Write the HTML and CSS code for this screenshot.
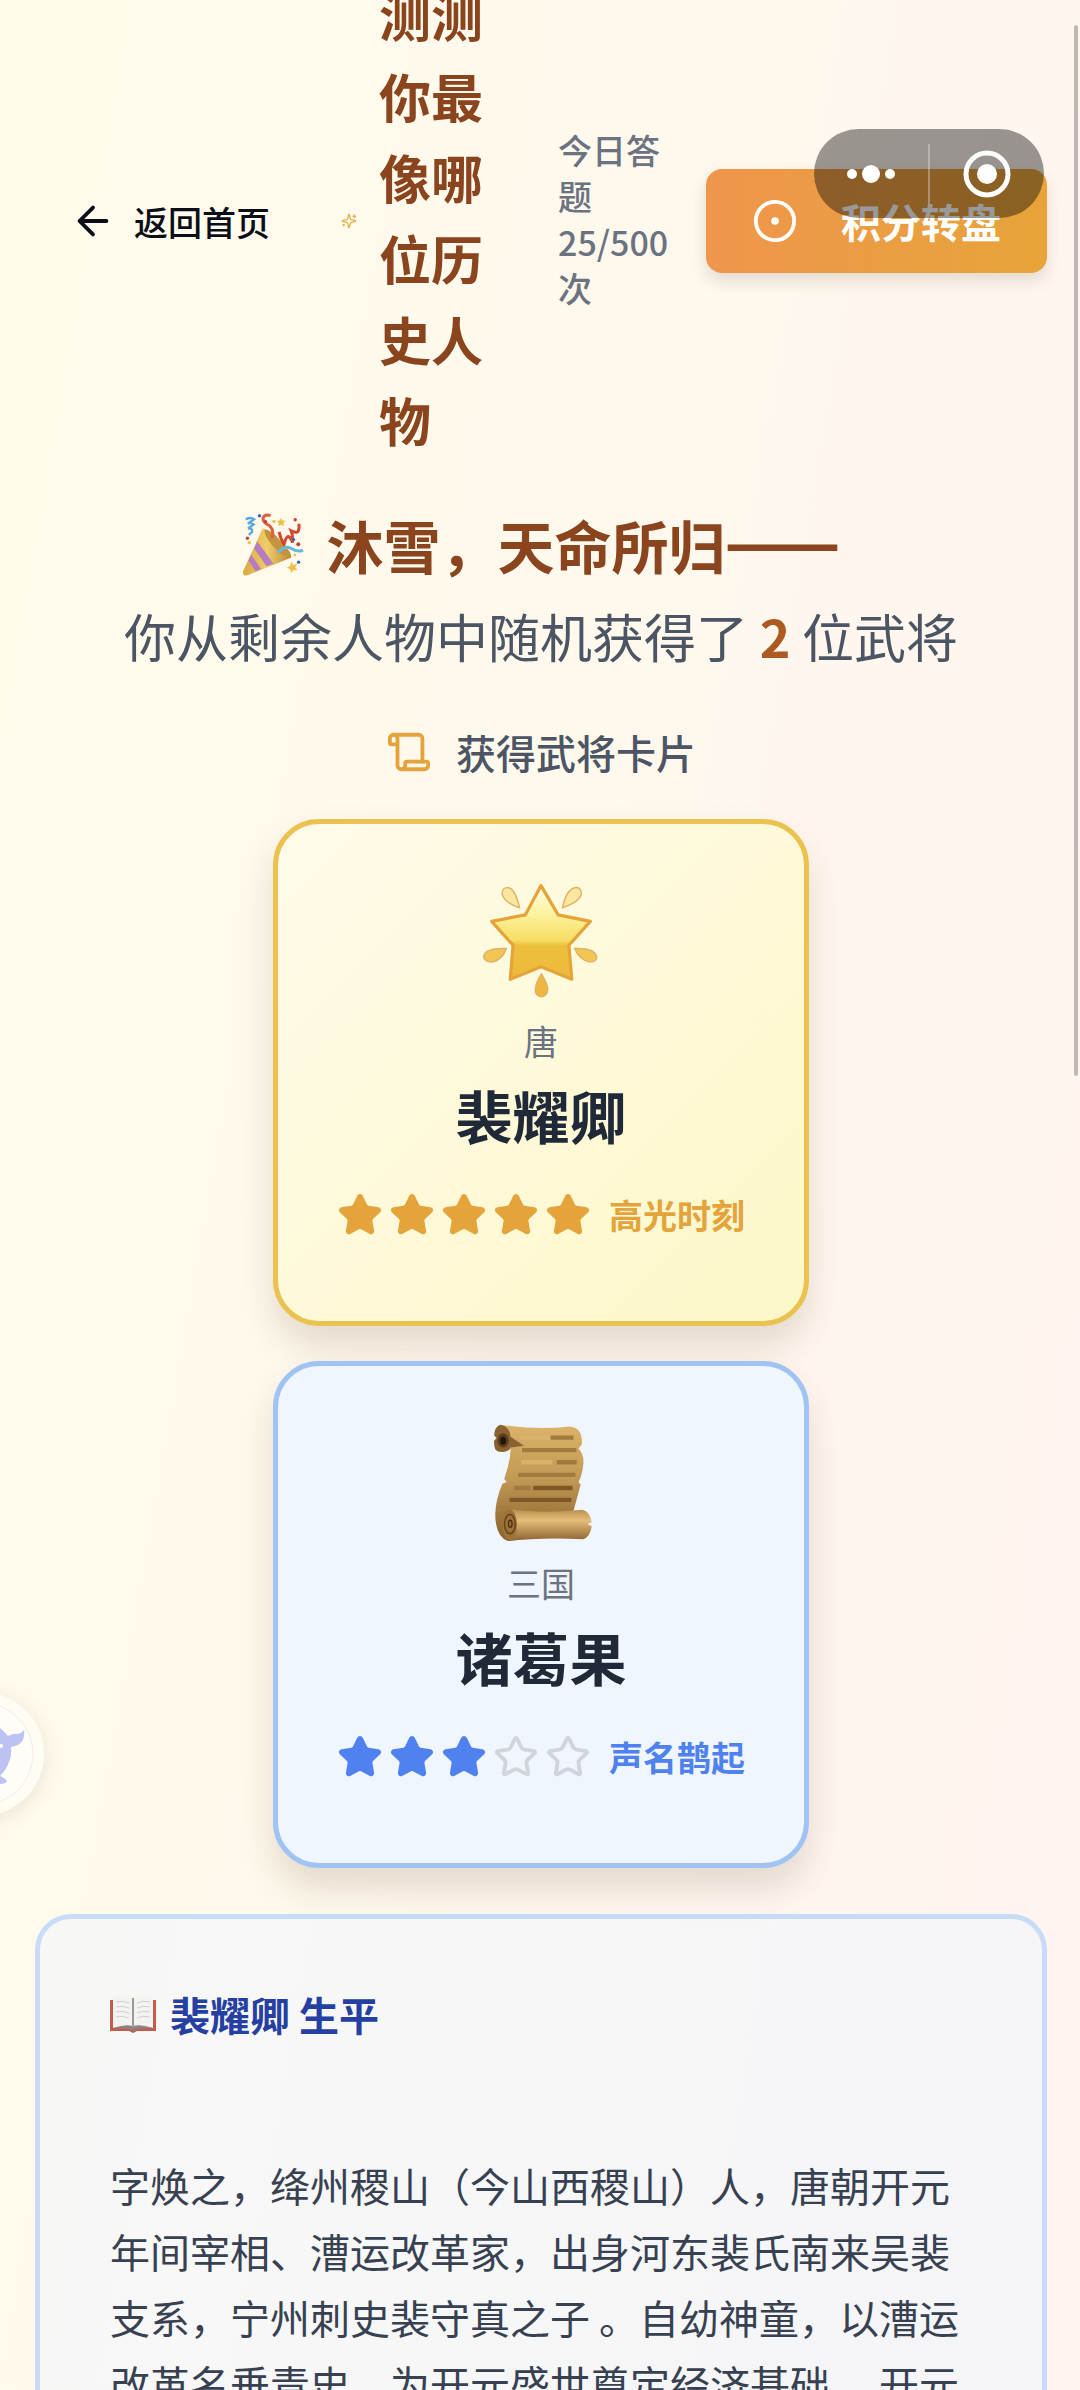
FILE: index.html
```
<!DOCTYPE html>
<html lang="zh-CN">
<head>
<meta charset="utf-8">
<meta name="viewport" content="width=device-width, initial-scale=1">
<title>测测你最像哪位历史人物</title>
<link rel="stylesheet" href="styles.css">
</head>
<body>
<svg class="defs" aria-hidden="true">
  <symbol id="star" viewBox="0 0 24 24"><path d="M11.525 2.295a.53.53 0 0 1 .95 0l2.31 4.679a2.123 2.123 0 0 0 1.595 1.16l5.166.756a.53.53 0 0 1 .294.904l-3.736 3.638a2.123 2.123 0 0 0-.611 1.878l.882 5.14a.53.53 0 0 1-.771.56l-4.618-2.428a2.122 2.122 0 0 0-1.973 0L6.396 21.01a.53.53 0 0 1-.77-.56l.881-5.139a2.122 2.122 0 0 0-.611-1.879L2.16 9.795a.53.53 0 0 1 .294-.906l5.165-.755a2.122 2.122 0 0 0 1.597-1.16z" stroke="currentColor" stroke-width="2" stroke-linejoin="round"/></symbol>
</svg>
<div class="page">
  <header class="topbar">
    <button class="back" type="button">
      <svg class="icon" viewBox="0 0 24 24"><path d="m12 19-7-7 7-7M19 12H5"/></svg>
      <span>返回首页</span>
    </button>
    <div class="brand">
      <svg class="icon spark" viewBox="0 0 24 24"><path d="M9.94 15.5A2 2 0 0 0 8.5 14.06l-6.14-1.58a.5.5 0 0 1 0-.96L8.5 9.94A2 2 0 0 0 9.94 8.5l1.58-6.14a.5.5 0 0 1 .96 0l1.58 6.14a2 2 0 0 0 1.44 1.44l6.14 1.58a.5.5 0 0 1 0 .96l-6.14 1.58a2 2 0 0 0-1.44 1.44l-1.58 6.14a.5.5 0 0 1-.96 0z"/><path d="M20 3v4M22 5h-4M4 17v2M5 18H3"/></svg>
      <h1>测测你最像哪位历史人物</h1>
    </div>
    <div class="tools">
      <p class="quota">今日答题25/500次</p>
      <button class="wheel" type="button">
        <svg class="icon" viewBox="0 0 24 24"><circle cx="12" cy="12" r="10"/><circle cx="12" cy="12" r="1"/></svg>
        <span>积分转盘</span>
      </button>
    </div>
  </header>

  <main>
    <h2 class="headline">
      <svg class="popper" viewBox="40 45 184 190" aria-hidden="true">
        <defs><linearGradient id="cone" x1="0" x2="1"><stop offset="0" stop-color="#d9a93c"/><stop offset=".5" stop-color="#f0cd6b"/><stop offset="1" stop-color="#b98a35"/></linearGradient></defs>
        <path d="M98 94Q110 92 150 132Q188 165 182 181L53 233Q39 236 40 222z" fill="url(#cone)"/>
        <path d="M104 97q20 0 50 36q28 30 25 45q-22 2-52-34q-27-32-23-47z" fill="#c3933f"/>
        <path d="M82 132l48 66-20 8-37-52zM64 172l30 42-17 7-21-32z" fill="#b87cc0"/>
        <path d="M122 56q-16-6-22 5q-3 12 14 22q20 12 12 40" fill="none" stroke="#dd603c" stroke-width="9"/>
        <path d="M147 104q4 20 15 37q6-24 13-23q8 5 12 18q1-24-4-35q18 8 21 1q4-9 2-22" fill="none" stroke="#d5472f" stroke-width="9"/>
        <path d="M48 67q16-8 25 0l-19 12q12-3 18 3l-17 12q13-2 12 10l-10 9" fill="none" stroke="#57a9dc" stroke-width="7"/>
        <path d="M143 166q20-22 38-14q22 14 37 6" fill="none" stroke="#68b9df" stroke-width="9"/>
        <g fill="#f0bf48"><path d="m153 62 4 8 9 1-6 7 1 9-8-4-8 4 1-9-6-7 9-1zM184 193l5 9 12-3-6 10 7 9-12-1-7 9-3-11-10-5 10-5z"/><circle cx="132" cy="73" r="5"/><circle cx="59" cy="136" r="5"/><circle cx="194" cy="173" r="4"/></g>
        <g fill="#3f63b5"><circle cx="89" cy="56" r="5"/><circle cx="190" cy="127" r="5"/><circle cx="205" cy="194" r="5"/></g>
        <g fill="#c54336"><circle cx="107" cy="74" r="5"/><circle cx="53" cy="123" r="5"/><circle cx="195" cy="68" r="5"/><circle cx="204" cy="141" r="6"/></g>
      </svg>
      <span>沐雪，天命所归<span class="dash">——</span></span>
    </h2>
    <p class="summary">你从剩余人物中随机获得了 <strong>2</strong> 位武将</p>
    <p class="section-label">
      <svg class="icon" viewBox="0 0 24 24"><path d="M19 17V5a2 2 0 0 0-2-2H4"/><path d="M8 21h12a2 2 0 0 0 2-2v-1a1 1 0 0 0-1-1H11a1 1 0 0 0-1 1v1a2 2 0 1 1-4 0V5a2 2 0 1 0-4 0v2a1 1 0 0 0 1 1h3"/></svg>
      <span>获得武将卡片</span>
    </p>

    <section class="cards">
      <article class="card card-gold">
        <svg class="emblem" viewBox="623 230 330 330" aria-hidden="true">
          <defs>
            <linearGradient id="gold" x1="0" y1="0" x2="0" y2="1"><stop offset="0" stop-color="#fffce9"/><stop offset=".3" stop-color="#fdf3a0"/><stop offset=".58" stop-color="#f6de63"/><stop offset=".64" stop-color="#edc03c"/><stop offset="1" stop-color="#efb93c"/></linearGradient>
          </defs>
          <path d="M788 240 836 322 926 340 866 407 874 502 788 467 702 502 710 407 650 340 744 322z" fill="url(#gold)" stroke="#e5a43a" stroke-width="9" stroke-linejoin="round"/>
          <g stroke="#e0b266" stroke-width="4">
            <path d="M728 302Q684 288 679 262Q680 244 698 246Q716 250 728 302z" fill="#fbe6a0"/>
            <path d="M848 302Q858 252 882 246Q900 243 901 262Q897 286 848 302z" fill="#fbe6a0"/>
            <path d="M691 416Q678 452 646 454Q626 451 628 436Q635 414 691 416z" fill="#f1c653"/>
            <path d="M882 416Q937 414 944 438Q945 453 924 454Q896 449 882 416z" fill="#f1c653"/>
            <path d="M789 487Q807 515 807 532Q805 550 789 551Q773 550 772 532Q772 514 789 487z" fill="#ecb640"/>
          </g>
        </svg>
        <p class="era">唐</p>
        <h3>裴耀卿</h3>
        <div class="rating">
          <svg><use href="#star"/></svg><svg><use href="#star"/></svg><svg><use href="#star"/></svg><svg><use href="#star"/></svg><svg><use href="#star"/></svg>
          <span>高光时刻</span>
        </div>
      </article>

      <article class="card card-blue">
        <svg class="emblem" viewBox="623 204 330 330" aria-hidden="true">
          <defs>
            <linearGradient id="paper" x1="0" y1="0" x2="0" y2="1"><stop offset="0" stop-color="#dcb369"/><stop offset=".45" stop-color="#c39a55"/><stop offset="1" stop-color="#87602a"/></linearGradient>
            <linearGradient id="roll" x1="0" y1="0" x2="0" y2="1"><stop offset="0" stop-color="#b98c4b"/><stop offset=".35" stop-color="#e5bd79"/><stop offset="1" stop-color="#8d6430"/></linearGradient>
          </defs>
          <path d="M674 206Q780 222 868 211Q906 214 902 262L893 272Q910 292 906 318Q904 345 893 366L899 373L878 450L720 528L695 531Q660 518 660 455Q662 412 680 371L692 366L685 358Q701 315 703 274Q684 286 660 276z" fill="url(#paper)"/>
          <path d="M674 206Q700 210 703 240L740 265L703 270Q694 286 668 281Q655 276 657 250L664 244L657 236Q658 212 674 206z" fill="#8a6230"/>
          <ellipse cx="682" cy="250" rx="16" ry="20" fill="#5d3d1b"/><ellipse cx="682" cy="251" rx="8" ry="11" fill="#21140a"/>
          <path d="M704 442Q780 456 904 444Q925 450 930 478L918 484L930 490Q925 521 906 526Q790 520 695 531Q725 500 704 442z" fill="url(#roll)"/>
          <ellipse cx="700" cy="486" rx="21" ry="43" fill="#9c7238"/><ellipse cx="701" cy="484" rx="15" ry="27" fill="none" stroke="#624018" stroke-width="4"/><ellipse cx="702" cy="483" rx="5" ry="10" fill="none" stroke="#4c3010" stroke-width="4"/>
          <path d="M729 242h86M733 311h86" stroke="#d9b26c" stroke-width="12"/>
          <path d="M815 242h64M735 277h152M832 311h56M724 346h160M713 383h46" stroke="#a17a3d" stroke-width="12"/>
          <path d="M766 383h110M700 416h173" stroke="#7d5925" stroke-width="12"/>
        </svg>
        <p class="era">三国</p>
        <h3>诸葛果</h3>
        <div class="rating">
          <svg><use href="#star"/></svg><svg><use href="#star"/></svg><svg><use href="#star"/></svg><svg class="empty"><use href="#star"/></svg><svg class="empty"><use href="#star"/></svg>
          <span>声名鹊起</span>
        </div>
      </article>
    </section>

    <section class="bio">
      <h3>
        <svg class="book" viewBox="0 0 46 40" aria-hidden="true"><path d="M0 6h46v31H27l-4 2-4-2H0z" fill="#c25c50"/><path d="M3 3q12-3 20 1q8-4 20-1v31q-12-2-20 2q-8-4-20-2z" fill="#f3f3f0"/><path d="M3 34q12-4 20-2q8-2 20 2l-16 1-4 2-4-2z" fill="#8d8583"/><path d="M23 4v29" stroke="#999" stroke-width="2"/><path d="M6 8q7-2 13 1M6 13q7-2 13 1M6 18q7-2 13 1M6 23q7-2 13 1M27 9q6-3 13-1M27 14q6-3 13-1M27 19q6-3 13-1M27 24q6-3 13-1" fill="none" stroke="#d0d0cd"/></svg>
        <span>裴耀卿 生平</span>
      </h3>
      <p>字焕之，绛州稷山（今山西稷山）人，唐朝开元年间宰相、漕运改革家，出身河东裴氏南来吴裴支系，宁州刺史裴守真之子 。自幼神童，以漕运改革名垂青史，为开元盛世奠定经济基础 。开元</p>
    </section>
  </main>

  <div class="capsule">
    <button type="button" aria-label="更多"><svg viewBox="0 0 50 20"><circle cx="6" cy="10" r="5"/><circle cx="25" cy="10" r="9"/><circle cx="44" cy="10" r="5"/></svg></button>
    <i></i>
    <button type="button" aria-label="关闭"><svg class="target" viewBox="0 0 50 50"><circle cx="25" cy="25" r="21" fill="none" stroke="#fff" stroke-width="5"/><circle cx="25" cy="25" r="10"/></svg></button>
  </div>
  <button class="assistant" type="button" aria-label="助手"><svg viewBox="0 0 104 104"><circle cx="52" cy="52" r="51" fill="#fffdf8" stroke="#f3ece6"/><path d="M20 40Q40 18 70 26Q74 29 78 34Q84 31 88 32Q92 31 94 28Q95 32 93 38Q90 43 85 44L81 45Q82 53 79 60Q76 68 70 74Q75 76 77 79Q76 82 70 82Q30 88 20 60z" fill="#bcc2f2"/><circle cx="71" cy="44" r="2" fill="#fff"/></svg></button>
  <div class="scroll-thumb"></div>
</div>
</body>
</html>
```
FILE: styles.css
```
* { box-sizing: border-box; }
body, h1, h2, h3, p { margin: 0; }
body { font-family: "Noto Sans CJK SC", sans-serif; }
button { border: 0; background: none; padding: 0; font: inherit; color: inherit; }
svg { display: block; flex: none; }
.defs { position: absolute; width: 0; height: 0; }

.page {
  position: relative;
  height: 100vh;
  overflow: hidden;
  display: flow-root;
  background: linear-gradient(100deg, #fffceb 0%, #fff8ed 50%, #fff4f0 100%);
}
.icon {
  width: 46px;
  height: 46px;
  fill: none;
  stroke: currentColor;
  stroke-width: 2;
  stroke-linecap: round;
  stroke-linejoin: round;
}

.topbar {
  display: flex;
  align-items: center;
  margin-top: -26px;
  padding: 0 33px 0 35px;
}
.back {
  flex: none;
  display: flex;
  align-items: center;
  gap: 18px;
  padding: 0 35px;
  font-size: 34px;
  font-weight: 500;
  color: #0a0e18;
}
.brand { display: flex; align-items: center; gap: 22px; margin-left: 36px; }
.spark { width: 16px; height: 16px; color: #e3b04a; }
.brand h1 {
  width: 110px;
  padding-bottom: 8px;
  font-size: 52px;
  line-height: 81px;
  font-weight: 700;
  color: #8a451e;
}
.tools { display: flex; align-items: center; gap: 34px; margin-left: auto; }
.quota {
  width: 114px;
  padding-bottom: 4px;
  font-size: 34px;
  line-height: 46px;
  font-weight: 500;
  color: #6b7280;
}
.wheel {
  display: flex;
  align-items: center;
  justify-content: space-between;
  width: 341px;
  height: 104px;
  padding: 0 46px;
  border-radius: 16px;
  background: linear-gradient(90deg, #ef964d, #e7a439);
  box-shadow: 0 8px 16px rgba(60, 50, 30, .14);
  font-size: 40px;
  font-weight: 700;
  color: #fff;
}

main { padding: 30px 33px 0 35px; }
.headline {
  display: flex;
  justify-content: center;
  align-items: center;
  gap: 22px;
  font-size: 57px;
  line-height: 92px;
  color: #8a451e;
}
.dash { -webkit-text-stroke: 4px currentColor; }
.popper { width: 62px; height: 64px; }
.summary {
  margin-top: 6px;
  font-size: 52px;
  line-height: 80px;
  text-align: center;
  color: #4b5563;
}
.summary strong { color: #ad5a22; }
.section-label {
  display: flex;
  justify-content: center;
  align-items: center;
  gap: 24px;
  margin-top: 46px;
  font-size: 40px;
  line-height: 60px;
  font-weight: 500;
  color: #4b5563;
}
.section-label .icon { color: #e5a43b; }

.cards { display: grid; justify-content: center; gap: 35px; margin-top: 37px; }
.card {
  display: flex;
  flex-direction: column;
  align-items: center;
  padding: 58px 59px 83px;
  border: 5px solid;
  border-radius: 46px;
  box-shadow: 0 20px 36px rgba(70, 50, 30, .15);
}
.card-gold {
  border-color: #ebc14f;
  background: linear-gradient(135deg, #fffbea, #fcf8c8);
  color: #e5a43b;
}
.card-blue { border-color: #a0c3f3; background: #eff6ff; color: #4f82ee; }
.emblem { width: 118px; height: 118px; }
.era { margin-top: 18px; font-size: 34px; line-height: 46px; color: #6b7280; }
.card h3 { margin-top: 10px; font-size: 57px; line-height: 80px; color: #1f2937; }
.rating {
  display: flex;
  align-items: center;
  gap: 6px;
  margin-top: 38px;
  font-size: 34px;
  line-height: 46px;
  font-weight: 700;
}
.rating svg { width: 46px; height: 46px; fill: currentColor; }
.rating .empty { fill: none; color: #d1d5db; }
.rating span { margin-left: 12px; }

.bio {
  margin-top: 46px;
  padding: 65px 70px;
  border: 5px solid #c8dbf8;
  border-radius: 36px;
  background: linear-gradient(100deg, #f7f8f6, #f5f5f8);
}
.bio h3 {
  display: flex;
  align-items: center;
  gap: 14px;
  font-size: 40px;
  line-height: 60px;
  color: #2540a2;
}
.book { width: 46px; height: 40px; }
.bio p { margin-top: 108px; font-size: 40px; line-height: 66px; color: #374151; }

.capsule {
  position: absolute;
  top: 129px;
  right: 36px;
  display: flex;
  align-items: center;
  width: 230px;
  height: 89px;
  border-radius: 45px;
  background: rgba(0, 0, 0, .4);
}
.capsule button { flex: 1; display: flex; justify-content: center; }
.capsule i { width: 2px; height: 60px; background: rgba(255, 255, 255, .3); }
.capsule svg { width: 50px; height: 20px; fill: #fff; }
.capsule .target { height: 50px; }
.assistant {
  position: absolute;
  top: 1692px;
  left: -80px;
  padding: 10px;
  border-radius: 50%;
  background: #fffcf4;
  box-shadow: 0 4px 20px rgba(80, 70, 40, .12);
}
.assistant svg { width: 104px; height: 104px; }
.scroll-thumb {
  position: absolute;
  top: 25px;
  right: 2px;
  width: 4px;
  height: 1051px;
  border-radius: 2px;
  background: #bdb9b2;
}
```
